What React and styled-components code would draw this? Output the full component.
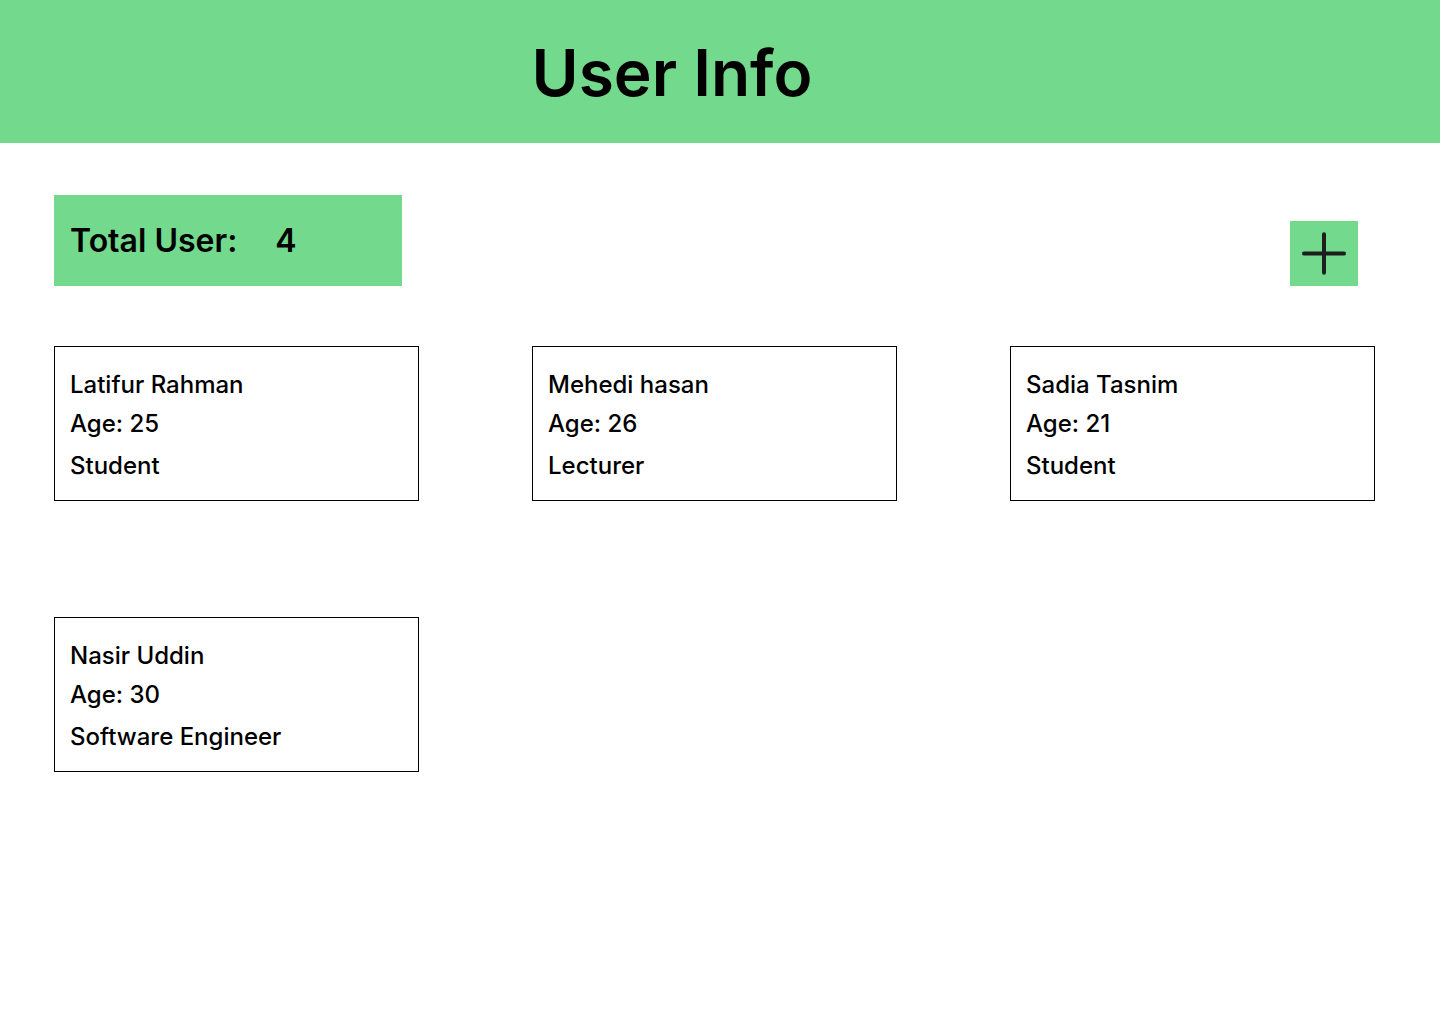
import React from "react";
import styled, { createGlobalStyle } from "styled-components";

const GlobalStyle = createGlobalStyle`
  *, *::before, *::after { box-sizing: border-box; }
  body { margin: 0; background: #fff; color: #000; font-family: Inter, "Liberation Sans", sans-serif; }
`;

const Header = styled.header`
  display: flex;
  justify-content: center;
  padding: 34px 96px 31px 0;
  background: #73d98d;
`;

const Title = styled.h1`
  margin: 0;
  font-size: 64px;
  line-height: 78px;
  font-weight: 600;
`;

const Main = styled.main`
  padding: 52px 65px 52px 54px;
`;

const Toolbar = styled.div`
  display: flex;
  justify-content: space-between;
  align-items: flex-end;
  padding-right: 17px;
  margin-bottom: 60px;
`;

const Total = styled.p`
  display: flex;
  gap: 38px;
  width: 348px;
  margin: 0;
  padding: 26px 16px;
  background: #73d98d;
  font-size: 32px;
  line-height: 39px;
  font-weight: 600;
`;

const AddButton = styled.button`
  display: flex;
  align-items: center;
  justify-content: center;
  width: 68px;
  height: 65px;
  padding: 0;
  border: 0;
  background: #73d98d;
  color: #1e1e1e;
  cursor: pointer;
`;

const UserGrid = styled.ul`
  display: grid;
  grid-template-columns: repeat(3, 1fr);
  gap: 116px 113px;
  margin: 0;
  padding: 0;
  list-style: none;
`;

const UserCard = styled.li`
  padding: 23px 15px 20px;
  border: 1px solid #000;
  font-size: 24px;
  line-height: 29px;
  font-weight: 500;
`;

const Name = styled.h2`
  margin: 0 0 10px;
  font: inherit;
`;

const Age = styled.p`
  margin: 0 0 13px;
`;

const Job = styled.p`
  margin: 0;
`;

const users = [
  { name: "Latifur Rahman", age: 25, job: "Student" },
  { name: "Mehedi hasan", age: 26, job: "Lecturer" },
  { name: "Sadia Tasnim", age: 21, job: "Student" },
  { name: "Nasir Uddin", age: 30, job: "Software Engineer" },
];

export default function App() {
  return (
    <>
      <GlobalStyle />
      <Header>
        <Title>User Info</Title>
      </Header>
      <Main>
        <Toolbar>
          <Total>
            <span>Total User:</span>
            <span>{users.length}</span>
          </Total>
          <AddButton type="button" aria-label="Add user">
            <svg width="44" height="43" viewBox="0 0 44 43" fill="none" stroke="currentColor" strokeWidth="4" strokeLinecap="round" aria-hidden="true">
              <path d="M22 2.3V40.7M2 21.5H42" />
            </svg>
          </AddButton>
        </Toolbar>
        <UserGrid>
          {users.map((user) => (
            <UserCard key={user.name}>
              <Name>{user.name}</Name>
              <Age>Age: {user.age}</Age>
              <Job>{user.job}</Job>
            </UserCard>
          ))}
        </UserGrid>
      </Main>
    </>
  );
}
